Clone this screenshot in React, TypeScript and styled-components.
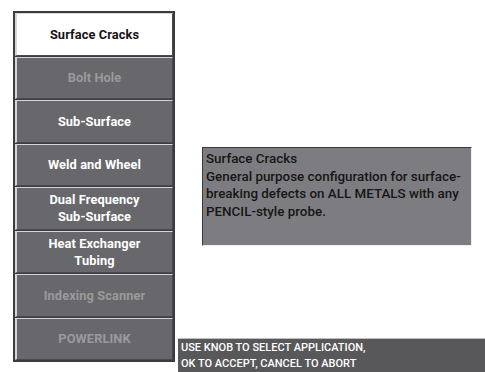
import React from "react";
import styled, { createGlobalStyle } from "styled-components";

const GlobalStyle = createGlobalStyle`
  html, body {
    margin: 0;
    padding: 0;
    background: #ffffff;
  }
  body {
    font-family: Roboto, "Liberation Sans", sans-serif;
  }
`;

const Screen = styled.div`
  width: 485px;
  height: 372px;
  display: grid;
  grid-template-columns: 178px 1fr;
  overflow: hidden;
`;

const LeftColumn = styled.div`
  padding: 11px 0 0 13px;
`;

const Menu = styled.div`
  width: 162px;
  height: 351px;
  box-sizing: border-box;
  display: flex;
  flex-direction: column;
  gap: 1px;
  padding: 1px;
  border: 1px solid #3c3c3e;
  background: #3c3c3e;
`;

type State = "selected" | "enabled" | "disabled";

const MenuButton = styled.div<{ $state: State }>`
  flex: 1;
  box-sizing: border-box;
  display: flex;
  align-items: center;
  justify-content: center;
  text-align: center;
  font-size: 12.8px;
  font-weight: 700;
  line-height: 17px;
  letter-spacing: 0.1px;
  border-style: solid;
  border-width: 1px 1px 1px 2px;
  border-color: #d6d6d8 #4a4a4c #4a4a4c #d6d6d8;
  background: ${(p) => (p.$state === "selected" ? "#ffffff" : "#68686c")};
  color: ${(p) =>
    p.$state === "selected"
      ? "#141414"
      : p.$state === "enabled"
      ? "#ffffff"
      : "#9a9a9c"};
`;

const RightColumn = styled.div`
  display: flex;
  flex-direction: column;
  justify-content: space-between;
`;

const InfoBox = styled.div`
  margin: 147px 13px 0 24px;
  height: 99px;
  box-sizing: border-box;
  padding: 2px 3px;
  background: #7d7d81;
  border-style: solid;
  border-width: 1px;
  border-color: #3a3a3c #f0f0f0 #f0f0f0 #3a3a3c;
  color: #161616;
  font-size: 13.4px;
  font-weight: 500;
  line-height: 17.5px;
  white-space: nowrap;
`;

const StatusBar = styled.div`
  height: 34px;
  box-sizing: border-box;
  padding: 1px 3px 0;
  background: #58585a;
  border-top: 1px solid #bdbdbd;
  color: #ffffff;
  font-size: 11px;
  font-weight: 500;
  line-height: 15.5px;
`;

const items: { label: React.ReactNode; state: State }[] = [
  { label: "Surface Cracks", state: "selected" },
  { label: "Bolt Hole", state: "disabled" },
  { label: "Sub-Surface", state: "enabled" },
  { label: "Weld and Wheel", state: "enabled" },
  { label: <>Dual Frequency<br />Sub-Surface</>, state: "enabled" },
  { label: <>Heat Exchanger<br />Tubing</>, state: "enabled" },
  { label: "Indexing Scanner", state: "disabled" },
  { label: "POWERLINK", state: "disabled" },
];

const App = () => {
  return (
    <>
      <GlobalStyle />
      <Screen>
        <LeftColumn>
          <Menu>
            {items.map((item, i) => (
              <MenuButton key={i} $state={item.state}>
                {item.label}
              </MenuButton>
            ))}
          </Menu>
        </LeftColumn>
        <RightColumn>
          <InfoBox>
            Surface Cracks
            <br />
            General purpose configuration for surface-
            <br />
            breaking defects on ALL METALS with any
            <br />
            PENCIL-style probe.
          </InfoBox>
          <StatusBar>
            USE KNOB TO SELECT APPLICATION,
            <br />
            OK TO ACCEPT, CANCEL TO ABORT
          </StatusBar>
        </RightColumn>
      </Screen>
    </>
  );
};

export default App;
